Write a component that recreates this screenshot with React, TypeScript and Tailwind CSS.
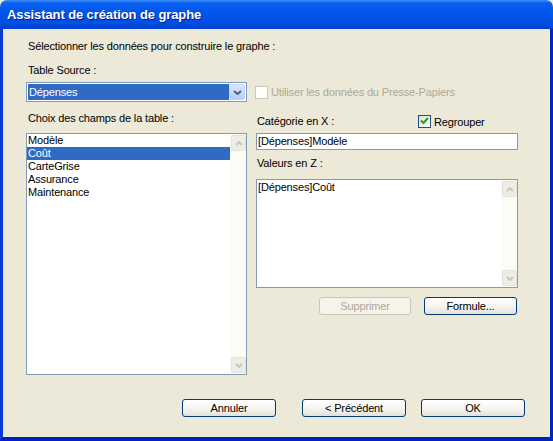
import React from 'react';

function Chevron({ dir, color, size = 7 }: { dir: 'up' | 'down'; color: string; size?: number }) {
  const h = Math.round(size / 2) + 1;
  const pts = dir === 'up' ? `1,${h - 1} ${size / 2 + 0.5},1 ${size},${h - 1}` : `1,1 ${size / 2 + 0.5},${h - 1} ${size},1`;
  return (
    <svg width={size + 1} height={h} viewBox={`0 0 ${size + 1} ${h}`}>
      <polyline points={pts} fill="none" stroke={color} strokeWidth="2" />
    </svg>
  );
}

function ScrollBar() {
  // disabled scrollbar, both arrows greyed
  return (
    <div className="w-[16px] h-full flex flex-col justify-between bg-[#fbfbf8] py-[1px]">
      <div className="w-[15px] h-[16px] ml-[1px] rounded-[2px] border border-[#e6e4d8] bg-[#eeede5] flex items-center justify-center">
        <Chevron dir="up" color="#c9c7ba" />
      </div>
      <div className="w-[15px] h-[16px] ml-[1px] rounded-[2px] border border-[#e6e4d8] bg-[#eeede5] flex items-center justify-center">
        <Chevron dir="down" color="#c9c7ba" />
      </div>
    </div>
  );
}

function XpButton({ label, w, disabled }: { label: string; w: string; disabled?: boolean }) {
  return (
    <div
      className={`${w} h-[18px] rounded-[3px] border flex items-center justify-center ${
        disabled
          ? 'border-[#c9c7ba] bg-[#f5f4ea] text-[#aca899]'
          : 'border-[#003c74] bg-[linear-gradient(to_bottom,#ffffff,#f3f2ee_60%,#e3e1d8)] text-black'
      }`}
    >
      {label}
    </div>
  );
}

export default function App() {
  const fields = ['Modèle', 'Coût', 'CarteGrise', 'Assurance', 'Maintenance'];

  return (
    <div className="w-[553px] h-[441px] bg-[#ece9d8] font-['Liberation_Sans',Arial,sans-serif] text-[11px] leading-[13px] tracking-[-0.15px] text-black">
      <div className="w-full h-full flex flex-col rounded-t-[7px] overflow-hidden">
        {/* title bar */}
        <div className="h-[29px] shrink-0 flex items-center pl-[7px] bg-[linear-gradient(to_bottom,#3d8ef8_0px,#0a60ef_3px,#0055ea_45%,#0050e4_75%,#0041d0_100%)]">
          <span className="text-white font-bold text-[13px] [text-shadow:1px_1px_0_#0a1a7e] tracking-[-0.1px]">
            Assistant de création de graphe
          </span>
        </div>

        {/* body */}
        <div className="flex-1 flex flex-col border-l-[3px] border-r-[3px] border-b-[4px] border-l-[#0a3ad8] border-r-[#0027c4] border-b-[#0022c0] pl-[23px]">
          <div className="mt-[11px] ml-[2px]">Sélectionner les données pour construire le graphe :</div>
          <div className="mt-[11px] ml-[2px]">Table Source :</div>

          {/* source row */}
          <div className="mt-[5px] flex items-center">
            <div className="w-[221px] h-[20px] border border-[#7f9db9] bg-white flex items-stretch p-[1px]">
              <div className="flex-1 bg-[#316ac5] text-white flex items-center pl-[1px]">Dépenses</div>
              <div className="w-[16px] rounded-[2px] border border-[#c3d3fd] bg-[linear-gradient(to_bottom,#dce6fe,#b8cbf9)] flex items-center justify-center">
                <Chevron dir="down" color="#4d6185" size={8} />
              </div>
            </div>
            <div className="ml-[8px] w-[13px] h-[13px] border border-[#cac8bb] bg-white" />
            <span className="ml-[3px] text-[#aca899]">Utiliser les données du Presse-Papiers</span>
          </div>

          {/* two columns */}
          <div className="mt-[9px] flex gap-[9px]">
            <div className="w-[221px] flex flex-col">
              <div className="ml-[2px] h-[13px] mt-[1px]">Choix des champs de la table :</div>
              <div className="mt-[8px] h-[242px] border border-[#7f9db9] bg-white flex">
                <div className="flex-1 flex flex-col">
                  {fields.map((f) => (
                    <div
                      key={f}
                      className={`h-[13px] pl-[1px] ${f === 'Coût' ? 'bg-[#316ac5] text-white' : ''}`}
                    >
                      {f}
                    </div>
                  ))}
                </div>
                <ScrollBar />
              </div>
            </div>

            <div className="w-[262px] flex flex-col">
              <div className="h-[20px] flex items-center">
                <div className="w-[162px] pl-[1px] pt-[1px]">Catégorie en X :</div>
                <div className="w-[13px] h-[13px] border border-[#1c5180] bg-[linear-gradient(135deg,#dcdcd7,#ffffff)] flex items-center justify-center">
                  <svg width="9" height="8" viewBox="0 0 9 8">
                    <polyline points="1,3.5 3.5,6 8,1" fill="none" stroke="#21a121" strokeWidth="2" />
                  </svg>
                </div>
                <span className="ml-[3px] pt-[2px]">Regrouper</span>
              </div>
              <div className="mt-[2px] h-[17px] border border-[#7f9db9] bg-white flex items-center pl-[1px]">
                [Dépenses]Modèle
              </div>
              <div className="mt-[7px] ml-[1px] h-[13px]">Valeurs en Z :</div>
              <div className="mt-[9px] h-[109px] border border-[#7f9db9] bg-white flex">
                <div className="flex-1 pt-[1px] pl-[1px]">[Dépenses]Coût</div>
                <ScrollBar />
              </div>
              <div className="mt-[9px] flex justify-end gap-[13px] pr-[1px]">
                <XpButton label="Supprimer" w="w-[92px]" disabled />
                <XpButton label="Formule..." w="w-[93px]" />
              </div>
            </div>
          </div>

          {/* bottom buttons */}
          <div className="mt-[24px] flex justify-end pr-[25px]">
            <XpButton label="Annuler" w="w-[94px]" />
            <div className="w-[26px]" />
            <XpButton label="< Précédent" w="w-[104px]" />
            <div className="w-[15px]" />
            <XpButton label="OK" w="w-[104px]" />
          </div>
        </div>
      </div>
    </div>
  );
}
